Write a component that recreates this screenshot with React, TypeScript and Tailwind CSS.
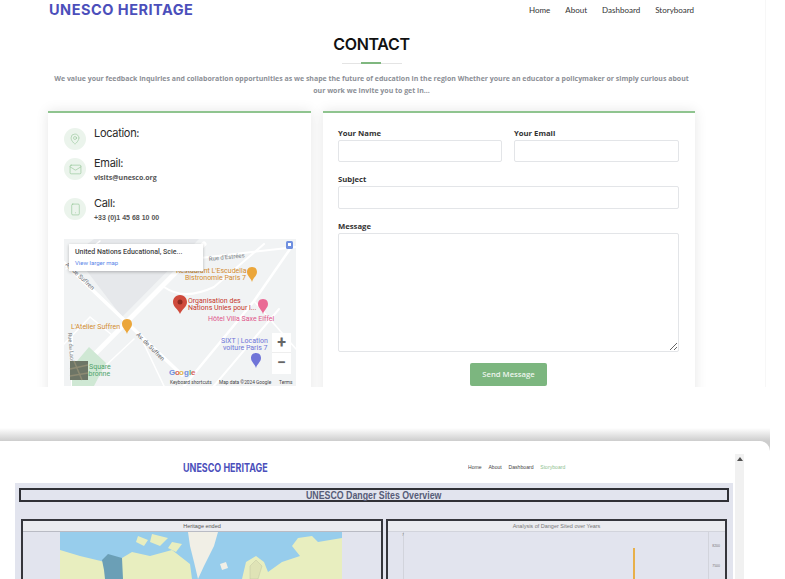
import { Mail, MapPin, Smartphone } from "lucide-react";
import type { ReactNode } from "react";

const openSans = { fontFamily: '"Open Sans", "Liberation Sans", sans-serif' };

function ContactRow({
  icon,
  label,
  detail,
  detailFont,
  className,
}: {
  icon: ReactNode;
  label: string;
  detail?: string;
  detailFont?: string;
  className: string;
}) {
  return (
    <div className={`flex gap-[8px] ${className}`}>
      <div className="flex h-[22px] w-[22px] shrink-0 items-center justify-center rounded-full bg-[#ebf4ec] text-[#85bd88]">
        {icon}
      </div>
      <div className="-mt-[3px]">
        <p className="font-['Inter'] text-[11px] leading-[16px] tracking-[-0.3px] text-[#2b2b2b]">{label}</p>
        {detail && <p className={`mt-[1px] text-[7px] font-bold leading-[12px] text-[#555] ${detailFont ?? ""}`}>{detail}</p>}
      </div>
    </div>
  );
}

function EmbeddedMap() {
  return (
    <div className="relative h-[147px] w-[232px] shrink-0 overflow-hidden bg-[#f1f3f4]">
      <svg width="232" height="147" viewBox="0 0 232 147" className="block">
        <polygon points="10,15 30,0 135,0 58,78" fill="#e6e8eb" />
        <g stroke="#ffffff" fill="none" strokeLinecap="round">
          <path d="M24 122 L140 5" strokeWidth="5" />
          <path d="M-2 22 L118 136" strokeWidth="3.5" />
          <path d="M100 48 Q120 62 150 48 L200 5" strokeWidth="2" />
          <path d="M110 22 L232 8" strokeWidth="2" />
          <path d="M120 147 L190 62 L226 10" strokeWidth="2.5" />
          <path d="M150 147 L215 70" strokeWidth="2" />
          <path d="M70 100 L38 130" strokeWidth="1.5" />
          <path d="M2 30 L36 2" strokeWidth="1.5" />
          <path d="M80 105 L100 147" strokeWidth="1.5" />
          <path d="M0 105 L26 78 L48 96" strokeWidth="1.5" />
          <path d="M8 95 L8 147" strokeWidth="2" />
          <path d="M190 62 L232 110" strokeWidth="1.5" />
        </g>
        <polygon points="8,128 25,108 42,124 30,147 8,147" fill="#cfe8d4" />
        <rect x="222" y="2" width="7" height="8" rx="1.5" fill="#6f8fe0" />
        <rect x="224" y="4" width="3" height="3" fill="#fff" />
        <g fontFamily="Roboto, sans-serif">
          <text x="145" y="22" fontSize="6" fill="#7b7f85" transform="rotate(-6 145 22)">Rue d'Estrées</text>
          <text x="1" y="26" fontSize="6" fill="#6b6f75" transform="rotate(43 1 26)">Av. de Suffren</text>
          <text x="72" y="96" fontSize="6" fill="#5e6267" transform="rotate(45 72 96)">Av. de Suffren</text>
          <text x="112" y="34" fontSize="7" fill="#d28a2e">Restaurant L'Escudella</text>
          <text x="121" y="41" fontSize="7" fill="#d28a2e">Bistronomie Paris 7</text>
          <text x="124" y="64" fontSize="7" fill="#c5352b">Organisation des</text>
          <text x="124" y="71" fontSize="7" fill="#c5352b">Nations Unies pour l...</text>
          <text x="144" y="82" fontSize="7" fill="#e0558a">Hôtel Villa Saxe Eiffel</text>
          <text x="7" y="90" fontSize="7" fill="#d28a2e">L'Atelier Suffren</text>
          <text x="157" y="104" fontSize="7" fill="#6f74d8">SIXT | Location</text>
          <text x="159" y="111" fontSize="7" fill="#6f74d8">voiture Paris 7</text>
          <text x="25" y="130" fontSize="7" fill="#4fa36b">Square</text>
          <text x="10" y="137" fontSize="7" fill="#4fa36b">Cambronne</text>
          <text x="4" y="94" fontSize="5.5" fill="#7b7f85" transform="rotate(85 4 94)">Rue du Laos</text>
        </g>
        <path d="M116 56 C111 56 109 60 109 63 C109 68 114 70 116 75 C118 70 123 68 123 63 C123 60 121 56 116 56Z" fill="#cf4a3c" />
        <circle cx="116" cy="63" r="2.5" fill="#8e2a20" />
        <path d="M188 28 C184 28 183 31 183 33 C183 37 187 39 188 43 C189 39 193 37 193 33 C193 31 192 28 188 28Z" fill="#eba63a" />
        <path d="M63 80 C59 80 58 83 58 85 C58 89 62 91 63 95 C64 91 68 89 68 85 C68 83 67 80 63 80Z" fill="#eba63a" />
        <path d="M199 60 C195 60 194 63 194 65 C194 69 198 71 199 75 C200 71 204 69 204 65 C204 63 203 60 199 60Z" fill="#ea6a95" />
        <path d="M192 114 C188 114 187 117 187 119 C187 123 191 125 192 129 C193 125 197 123 197 119 C197 117 196 114 192 114Z" fill="#6f74d8" />
        <rect x="6" y="122" width="18" height="19" fill="#6d7566" />
        <path d="M6 130 L24 126 M10 122 L18 141 M6 137 L24 134" stroke="#8d8a72" strokeWidth="1.5" />
        <g fontFamily="Liberation Sans, sans-serif" fontSize="8" fontWeight="700">
          <text x="105" y="136" fill="#6f8fe0">G</text>
          <text x="111" y="136" fill="#d9655a">o</text>
          <text x="115" y="136" fill="#e0b64a">o</text>
          <text x="120" y="136" fill="#6f8fe0">g</text>
          <text x="125" y="136" fill="#6bb07a">l</text>
          <text x="127" y="136" fill="#d9655a">e</text>
        </g>
        <g fontFamily="Roboto, sans-serif" fontSize="4.8" fill="#444">
          <text x="106" y="145">Keyboard shortcuts</text>
          <text x="155" y="145">Map data ©2024 Google</text>
          <text x="215" y="145">Terms</text>
        </g>
      </svg>
      <div className="absolute left-[5px] top-[5px] h-[27px] w-[134px] bg-white px-[6px] pt-[3px] font-['Roboto'] shadow-[0_1px_3px_rgba(0,0,0,0.25)]">
        <p className="text-[7px] font-medium leading-[11px] text-[#444]">United Nations Educational, Scie...</p>
        <p className="text-[6px] leading-[9px] text-[#5a85e8]">View larger map</p>
      </div>
      <div className="absolute left-[208px] top-[94px] flex h-[41px] w-[19px] flex-col items-center bg-white font-['Roboto'] text-[16px] font-bold leading-[20px] text-[#666]">
        <span className="h-[20px] w-full border-b border-[#eee] text-center">+</span>
        <span>−</span>
      </div>
    </div>
  );
}

function FormField({ label, className, inputClass }: { label: string; className?: string; inputClass: string }) {
  return (
    <div className={className}>
      <p className="text-[7.7px] font-bold leading-[11px] text-[#333]">{label}</p>
      <div className={`mt-[1px] rounded-[2px] border border-[#e3e5e8] bg-white ${inputClass}`} />
    </div>
  );
}

function ContactSection() {
  return (
    <section className="h-[387px] w-[766px] overflow-hidden border-r border-[#f7f7f7] pl-[48px]" style={openSans}>
      <div className="w-[647px]">
        <header className="flex h-[20px] items-center justify-between">
          <span className="pl-[1px] font-['Inter'] text-[14.5px] font-bold leading-[20px] tracking-[0.5px] text-[#4b4fbb]">
            UNESCO HERITAGE
          </span>
          <nav className="flex gap-[15px] pr-[1px] font-['Lato'] text-[8px] leading-[18px] text-[#333]">
            <span>Home</span>
            <span>About</span>
            <span>Dashboard</span>
            <span>Storyboard</span>
          </nav>
        </header>
        <h1 className="mt-[13px] text-center font-['Inter'] text-[16px] font-semibold leading-[22px] tracking-[-0.3px] text-[#111]">
          CONTACT
        </h1>
        <div className="relative mx-auto mt-[8px] h-[1px] w-[60px] bg-[#e4e4e4]">
          <div className="absolute left-[19px] top-[-1px] h-[2px] w-[20px] bg-[#7fb77f]" />
        </div>
        <p className="mt-[9px] text-center text-[6.97px] font-bold leading-[12px] text-[#8c8f96]">
          We value your feedback inquiries and collaboration opportunities as we shape the future of education in the region Whether youre an educator a policymaker or simply curious about our work we invite you to get in...
        </p>
        <div className="mt-[14px] flex items-start gap-[12px]">
          <div className="flex h-[300px] w-[263px] flex-col border-t-2 border-[#8fc48f] bg-white pl-[16px] pt-[15px] shadow-[0_0_12px_rgba(0,0,0,0.1)]">
            <ContactRow className="h-[30px]" label="Location:" icon={<MapPin size={12} strokeWidth={1} />} />
            <ContactRow className="h-[40px]" label="Email:" detail="visits@unesco.org" icon={<Mail size={13} strokeWidth={1} />} />
            <ContactRow
              className="h-[41px]"
              label="Call:"
              detail="+33 (0)1 45 68 10 00"
              detailFont="font-['Liberation_Sans']"
              icon={<Smartphone size={13} strokeWidth={1} />}
            />
            <EmbeddedMap />
          </div>
          <div className="h-[300px] w-[372px] border-t-2 border-[#8fc48f] bg-white pl-[15px] pr-[16px] pt-[15px] shadow-[0_0_12px_rgba(0,0,0,0.1)]">
            <div className="flex gap-[12px]">
              <FormField label="Your Name" className="w-[164px]" inputClass="h-[22px]" />
              <FormField label="Your Email" className="w-[165px]" inputClass="h-[22px]" />
            </div>
            <FormField label="Subject" className="mt-[12px]" inputClass="h-[23px]" />
            <div className="mt-[12px]">
              <p className="text-[7.7px] font-bold leading-[11px] text-[#333]">Message</p>
              <textarea
                readOnly
                className="mt-[1px] block h-[119px] w-full rounded-[2px] border border-[#e3e5e8] bg-white"
              />
            </div>
            <div className="mt-[11px] flex justify-center">
              <button className="h-[23px] w-[77px] rounded-[2px] bg-[#7cb67f] text-[7.7px] font-semibold text-[#edf5ed]">
                Send Message
              </button>
            </div>
          </div>
        </div>
      </div>
    </section>
  );
}

function HeritageMap() {
  return (
    <svg width="282" height="47" viewBox="0 0 282 47" className="block">
      <rect width="282" height="47" fill="#97cdec" />
      <path d="M0 18 L20 24 L45 30 L62 26 L72 20 L90 24 L112 18 L130 32 L132 47 L0 47Z" fill="#e8eebf" />
      <path d="M42 28 L48 22 L62 26 L63 47 L45 47 L44 38Z" fill="#6b9fb6" />
      <path d="M78 4 L88 8 L84 14 L76 10Z M92 2 L108 6 L100 14 L90 10Z M112 10 L122 12 L116 20 L108 16Z" fill="#e8eebf" />
      <path d="M128 0 L158 0 L154 14 L144 34 L138 47 L134 30 L130 14Z" fill="#f1efe6" />
      <path d="M160 32 L166 30 L168 36 L162 38Z" fill="#f1efe6" />
      <path d="M182 47 L186 30 L196 24 L204 30 L208 40 L222 30 L240 24 L232 14 L238 6 L252 4 L258 10 L282 6 L282 47Z" fill="#e8eebf" />
      <path d="M190 34 L196 28 L202 34 L198 47 L190 47Z" fill="#dfe3b6" stroke="#b9bda0" strokeWidth="0.4" />
    </svg>
  );
}

function ChartPanel() {
  return (
    <div className="relative h-[47px] bg-[#e2e4ee]">
      <div className="ml-[15px] h-full w-[306px] border-x border-[#d2d4dc]" />
      <span className="absolute left-[14px] top-[1px] text-[3.5px] text-[#777]">7</span>
      <span className="absolute right-[5px] top-[12px] text-[3.5px] text-[#777]">8200</span>
      <span className="absolute right-[5px] top-[32px] text-[3.5px] text-[#777]">7500</span>
      <div className="absolute left-[245px] top-[16px] h-[31px] w-[2px] bg-[#e8b04a]" />
    </div>
  );
}

function DashboardPreview() {
  return (
    <section
      className="mt-[41px] h-[151px] w-[770px] overflow-hidden bg-[linear-gradient(#ffffff,#cdcdcd_13px)]"
      style={{ fontFamily: '"Liberation Sans", sans-serif' }}
    >
      <div className="mt-[13px] h-[138px] rounded-tr-[10px] bg-white pl-[15px]">
        <div className="flex">
          <div className="w-[718px]">
            <header className="flex h-[42px] items-center pt-[10px]">
              <div className="ml-[168px] w-[85px] whitespace-nowrap">
                <span className="inline-block origin-left scale-x-[0.78] font-['Inter'] text-[11.5px] font-bold text-[#4b4fbb]">
                  UNESCO HERITAGE
                </span>
              </div>
              <nav className="ml-[200px] flex origin-left scale-x-[0.85] gap-[8px] text-[6px] text-[#444]">
                <span>Home</span>
                <span>About</span>
                <span>Dashboard</span>
                <span className="text-[#8fbf8f]">Storyboard</span>
              </nav>
            </header>
            <div className="h-[96px] overflow-hidden bg-[#e2e4ee] px-[4px] pt-[5px]">
              <h2 className="flex h-[14px] items-center justify-center border-2 border-[#2f3036]">
                <span className="scale-x-[0.8] whitespace-nowrap text-[11px] font-bold leading-[10px] text-[#565c78]">
                  UNESCO Danger Sites Overview
                </span>
              </h2>
              <div className="mt-[17px] flex gap-[3px] pl-[2px]">
                <div className="h-[70px] w-[362px] border-2 border-[#35363c]">
                  <p className="h-[11px] border-b border-[#b9bbc4] bg-[#ebecf0] text-center text-[5.5px] leading-[10px] text-[#555]">
                    Heritage ended
                  </p>
                  <div className="flex justify-center bg-[#e2e4ee] pr-[3px]">
                    <HeritageMap />
                  </div>
                </div>
                <div className="h-[70px] w-[341px] border-2 border-[#35363c]">
                  <p className="h-[11px] border-b border-[#d2d4dc] bg-[#ebecf0] text-center text-[5.5px] leading-[10px] text-[#777]">
                    Analysis of Danger Sited over Years
                  </p>
                  <ChartPanel />
                </div>
              </div>
            </div>
          </div>
          <div className="ml-[2px] mt-[13px] h-[125px] w-[9px] bg-[#f1f1f1] pt-[3px]">
            <div className="mx-auto h-0 w-0 border-x-[3px] border-b-[4px] border-x-transparent border-b-[#505050]" />
          </div>
        </div>
      </div>
    </section>
  );
}

export default function App() {
  return (
    <div className="h-[579px] w-[785px] overflow-hidden bg-white">
      <ContactSection />
      <DashboardPreview />
    </div>
  );
}
